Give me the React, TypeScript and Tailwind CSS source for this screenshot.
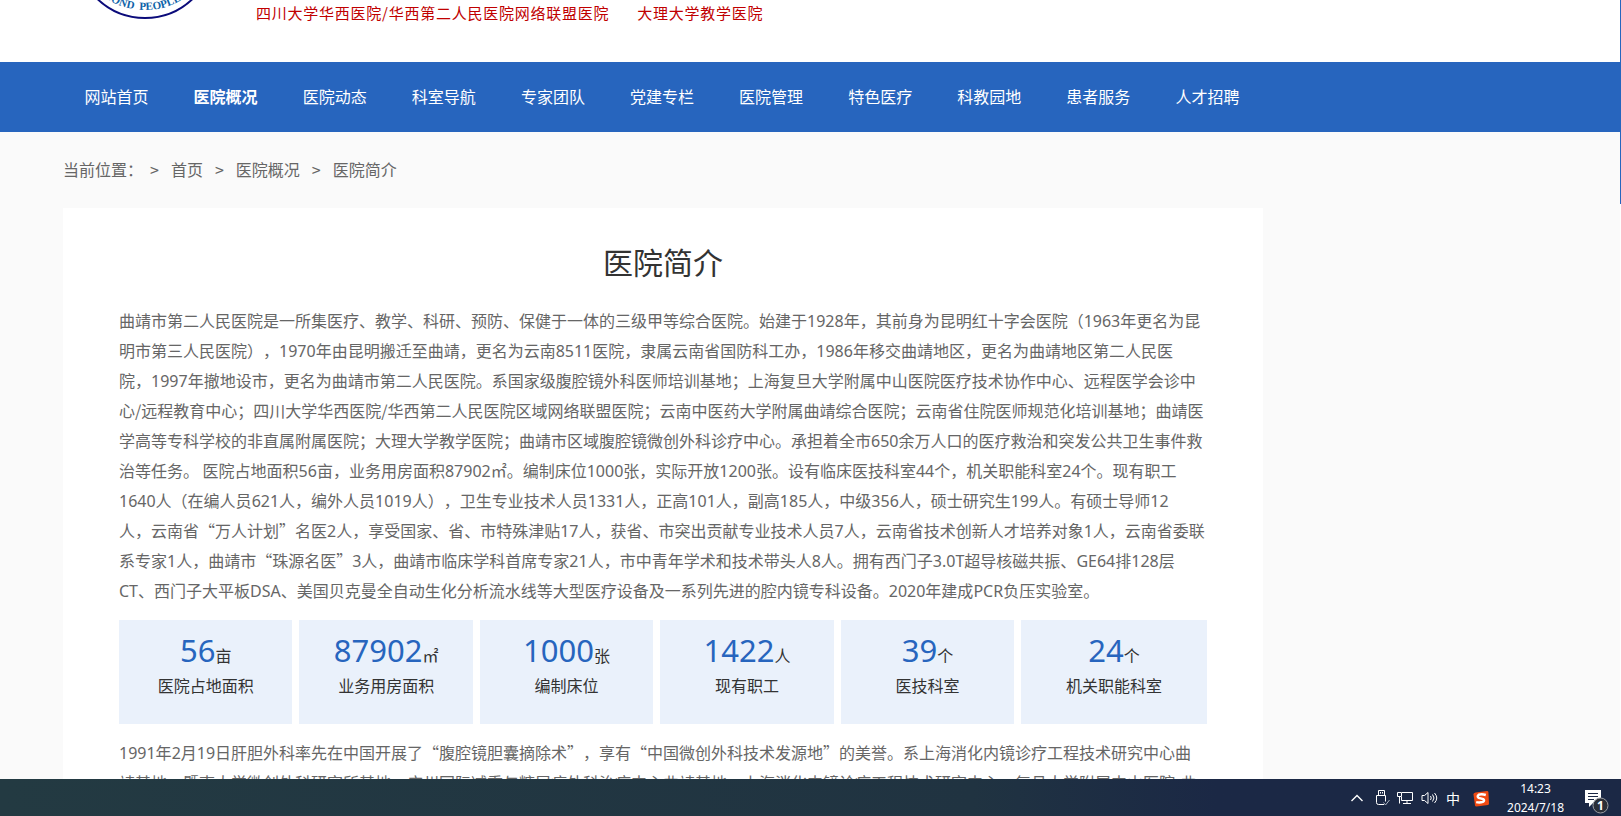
import React from "react";

const NAV = ["网站首页", "医院概况", "医院动态", "科室导航", "专家团队", "党建专栏", "医院管理", "特色医疗", "科教园地", "患者服务", "人才招聘"];

const INTRO = [
  "曲靖市第二人民医院是一所集医疗、教学、科研、预防、保健于一体的三级甲等综合医院。始建于1928年，其前身为昆明红十字会医院（1963年更名为昆",
  "明市第三人民医院），1970年由昆明搬迁至曲靖，更名为云南8511医院，隶属云南省国防科工办，1986年移交曲靖地区，更名为曲靖地区第二人民医",
  "院，1997年撤地设市，更名为曲靖市第二人民医院。系国家级腹腔镜外科医师培训基地；上海复旦大学附属中山医院医疗技术协作中心、远程医学会诊中",
  "心/远程教育中心；四川大学华西医院/华西第二人民医院区域网络联盟医院；云南中医药大学附属曲靖综合医院；云南省住院医师规范化培训基地；曲靖医",
  "学高等专科学校的非直属附属医院；大理大学教学医院；曲靖市区域腹腔镜微创外科诊疗中心。承担着全市650余万人口的医疗救治和突发公共卫生事件救",
  "治等任务。 医院占地面积56亩，业务用房面积87902㎡。编制床位1000张，实际开放1200张。设有临床医技科室44个，机关职能科室24个。现有职工",
  "1640人（在编人员621人，编外人员1019人），卫生专业技术人员1331人，正高101人，副高185人，中级356人，硕士研究生199人。有硕士导师12",
  "人，云南省“万人计划”名医2人，享受国家、省、市特殊津贴17人，获省、市突出贡献专业技术人员7人，云南省技术创新人才培养对象1人，云南省委联",
  "系专家1人，曲靖市“珠源名医”3人，曲靖市临床学科首席专家21人，市中青年学术和技术带头人8人。拥有西门子3.0T超导核磁共振、GE64排128层",
  "CT、西门子大平板DSA、美国贝克曼全自动生化分析流水线等大型医疗设备及一系列先进的腔内镜专科设备。2020年建成PCR负压实验室。",
];

const HISTORY = [
  "1991年2月19日肝胆外科率先在中国开展了“腹腔镜胆囊摘除术”，享有“中国微创外科技术发源地”的美誉。系上海消化内镜诊疗工程技术研究中心曲",
  "靖基地、暨南大学微创外科研究所基地、广州国际减重与糖尿病外科治疗中心曲靖基地、上海消化内镜诊疗工程技术研究中心、复旦大学附属中山医院-曲",
];

const STATS = [
  { value: "56", unit: "亩", label: "医院占地面积" },
  { value: "87902", unit: "㎡", label: "业务用房面积" },
  { value: "1000", unit: "张", label: "编制床位" },
  { value: "1422", unit: "人", label: "现有职工" },
  { value: "39", unit: "个", label: "医技科室" },
  { value: "24", unit: "个", label: "机关职能科室" },
];

// Digits and Latin letters are set in Noto Sans; everything else keeps the CJK face.
function Mixed({ text }: { text: string }) {
  return text.split(/([0-9A-Za-z.]+)/).map((part, i) =>
    i % 2 ? (
      <span key={i} className="font-['Noto_Sans',sans-serif] leading-none">{part}</span>
    ) : (
      part
    ),
  );
}

function Lines({ lines }: { lines: string[] }) {
  return (
    <p className="whitespace-nowrap text-base leading-[30px] text-[#666]">
      {lines.map((line, i) => (
        <React.Fragment key={i}>
          {i > 0 && <br />}
          <Mixed text={line} />
        </React.Fragment>
      ))}
    </p>
  );
}

function Emblem() {
  return (
    <svg className="h-5 w-[140px]" viewBox="75 0 140 20" role="img" aria-label="曲靖市第二人民医院">
      <circle cx="145" cy="-51" r="69" fill="#fff" stroke="#0b0b7a" strokeWidth="2" />
      <path id="ring" d="M79 -51a66 61 0 0 0 132 0" fill="none" />
      <text fontFamily="'Liberation Serif', serif" fontSize="11" fontWeight="700" fill="#0e63a8">
        <textPath href="#ring" startOffset="47.5%" textAnchor="middle">{"SECOND\u00a0\u00a0PEOPLE'S"}</textPath>
      </text>
    </svg>
  );
}

function Taskbar() {
  return (
    <footer className="flex h-[37px] shrink-0 items-center justify-end bg-linear-to-r from-[#233a42] via-[#203341] via-60% to-[#1b2845] to-75% pr-3 text-white">
      <div className="flex items-center">
        <button aria-label="显示隐藏的图标" className="mr-[11px]">
          <svg className="block size-3.5" viewBox="0 0 14 14" fill="none" stroke="currentColor" strokeWidth="1.4"><path d="M1.5 10 7 4.5 12.5 10" /></svg>
        </button>
        <button aria-label="安全删除硬件" className="mr-1.5">
          <svg className="block h-[18px] w-4" viewBox="0 0 16 18" fill="none" stroke="currentColor"><path d="M3.5 6.500V1.500h6v5M9 15.500H3.500a2 2 0 0 1-2-2v-7h9v6M5.500 3v1.500M7.500 3v1.500" /><path d="m8.500 13.500 2 2.500 4-5" stroke="#aab3c0" /></svg>
        </button>
        <button aria-label="网络" className="mr-2">
          <svg className="block size-4" viewBox="0 0 16 16" fill="none" stroke="currentColor"><path d="M5 2.500h10.500v8H4.500V7M10 10.500v3M6 13.500h8M.5 2.500h4v4h-4zM2.500 6.500v7" /></svg>
        </button>
        <button aria-label="音量" className="mr-2">
          <svg className="block h-4 w-[17px]" viewBox="0 0 17 16" fill="none" stroke="currentColor"><path d="M1 5.500h2.500L7 2.500v11l-3.500-3H1zM9.500 6q1.500 2 0 4M11.500 4.500q3 3.500 0 7M13.500 3q4.500 5 0 10" /></svg>
        </button>
        <button className="mr-[13px] text-sm leading-4">中</button>
        <button aria-label="搜狗输入法" className="mr-[18px] mt-[3px]">
          <svg className="block size-4" viewBox="0 0 16 16"><path d="M2.500 1.500 14 0q1.200 0 1.400 1L16 12.500q0 1.200-1 1.500L3.500 15.500q-1.200 0-1.500-1L.5 3.500q-.2-1.600 2-2" fill="#f04a12" /><path d="M12.800 4q-4-1.300-7-.3-2.300 1.600 0 3.300l4.400 1q2 1.500-.4 2.900-3 1-6.600.2" fill="none" stroke="#fff" strokeWidth="2.400" /></svg>
        </button>
        <time className="mr-[21px] text-center font-['Noto_Sans','Noto_Sans_CJK_SC',sans-serif] text-xs leading-[19px]" dateTime="2024-07-18T14:23">
          14:23<br />2024/7/18
        </time>
        <button aria-label="通知 1" className="mt-2">
          <svg className="block h-[25px] w-6" viewBox="0 0 24 25"><path d="M0 1h16v13H8l-4 4v-4H0z" fill="#fff" /><path d="M3 4.500h10M3 7.500h10M3 10.500h6" stroke="#1b2845" /><circle cx="15.500" cy="16.500" r="7.500" fill="#2b2f38" stroke="#9a9da3" /><text x="15.500" y="21" textAnchor="middle" fontSize="12" fontWeight="700" fill="#fff" fontFamily="'Noto Sans', sans-serif">1</text></svg>
        </button>
      </div>
    </footer>
  );
}

export default function App() {
  return (
    <div lang="zh-CN" className="flex h-screen flex-col overflow-hidden bg-[#fafafa] font-['Noto_Sans_CJK_SC',sans-serif] [text-spacing-trim:space-all]">
      <div className="flex min-h-0 flex-1">
        <div className="min-w-0 flex-1 overflow-hidden">
          <header className="flex h-[62px] items-start bg-white pl-[75px]">
            <Emblem />
            <p className="ml-[41px] flex gap-7 whitespace-nowrap text-[15px] leading-[26px] tracking-wider text-[#c00000]">
              <span>四川大学华西医院/华西第二人民医院网络联盟医院</span>
              <span>大理大学教学医院</span>
            </p>
          </header>
          <nav className="bg-[#2765be] pb-0.5 pl-[62px]">
            <ul className="grid max-w-[1200px] grid-cols-11 text-center text-base leading-[68px] text-white">
              {NAV.map((item, i) => (
                <li key={item}>
                  <a href="#" className={i === 1 ? "font-bold" : ""}>{item}</a>
                </li>
              ))}
            </ul>
          </nav>
          <div className="max-w-[1263px] pl-[63px]">
            <div className="flex h-[76px] items-center pb-0.5 text-base text-[#666]">
              <span className="mr-[7px]">当前位置：</span>
              {["首页", "医院概况", "医院简介"].map((item) => (
                <React.Fragment key={item}>
                  <span className="mr-3">&gt;</span>
                  <a href="#" className="mr-3">{item}</a>
                </React.Fragment>
              ))}
            </div>
            <main className="bg-white px-14 pt-[31px]">
              <h1 className="mb-[22px] text-center text-3xl leading-[44px] text-[#333]">医院简介</h1>
              <Lines lines={INTRO} />
              <ul className="mb-[13px] mt-[15px] grid grid-cols-[repeat(5,14fr)_15fr] gap-[7px]">
                {STATS.map((s) => (
                  <li key={s.label} className="h-[104px] bg-[#eaf1fb] pt-3 text-center text-base leading-6 text-[#333]">
                    <p className="leading-9">
                      <span className="font-['Noto_Sans',sans-serif] text-[31px] text-[#2765be]">{s.value}</span>
                      {s.unit}
                    </p>
                    <p>{s.label}</p>
                  </li>
                ))}
              </ul>
              <Lines lines={HISTORY} />
            </main>
          </div>
        </div>
        <div className="w-px bg-white">
          <div className="h-[204px] bg-[#2765be]" />
        </div>
      </div>
      <Taskbar />
    </div>
  );
}
